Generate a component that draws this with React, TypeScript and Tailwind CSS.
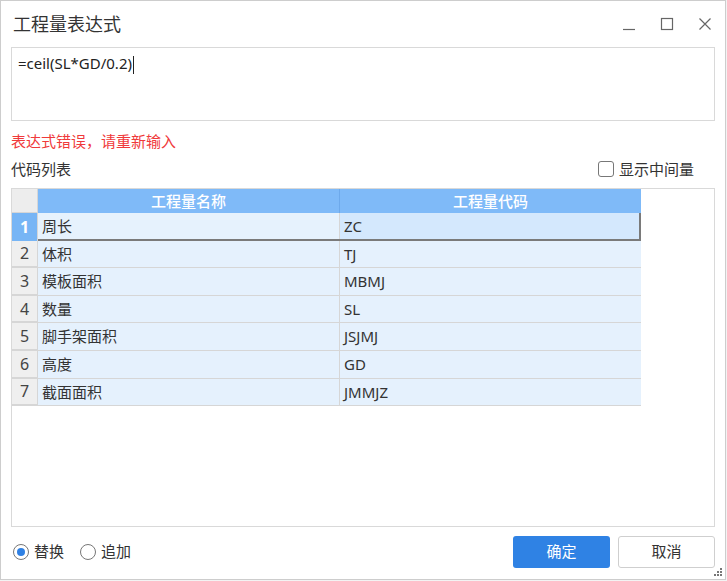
import { useState } from "react";

const ROWS = [
  { name: "周长", code: "ZC" },
  { name: "体积", code: "TJ" },
  { name: "模板面积", code: "MBMJ" },
  { name: "数量", code: "SL" },
  { name: "脚手架面积", code: "JSJMJ" },
  { name: "高度", code: "GD" },
  { name: "截面面积", code: "JMMJZ" },
];

const FONT = "font-['Noto_Sans','Noto_Sans_CJK_SC',sans-serif]";

export default function App() {
  const [mode, setMode] = useState<"replace" | "append">("replace");
  const [showMid, setShowMid] = useState(false);

  return (
    <div className={`w-[727px] h-[581px] bg-[#f3f3f3] ${FONT}`}>
      <div className="w-[726px] h-[580px] bg-white border border-[#cdcdcd] flex flex-col relative">
        {/* Title bar */}
        <div className="h-[46px] flex items-center pl-[12px] pr-[12px]">
          <span className="text-[18px] text-[#333]">工程量表达式</span>
          <div className="ml-auto flex items-center gap-[22px] text-[#555]">
            <svg width="16" height="16" viewBox="0 0 16 16">
              <path d="M2 13.5h12" stroke="#666" strokeWidth="1.2" />
            </svg>
            <svg width="16" height="16" viewBox="0 0 16 16">
              <rect x="2.5" y="2.5" width="11" height="11" fill="none" stroke="#666" strokeWidth="1.2" />
            </svg>
            <svg width="16" height="16" viewBox="0 0 16 16">
              <path d="M2.5 2.5l11 11M13.5 2.5l-11 11" stroke="#666" strokeWidth="1.2" />
            </svg>
          </div>
        </div>

        {/* Expression input */}
        <div className="mx-[10px] h-[74px] border border-[#d9d9d9] px-[6px] pt-[5px] leading-[20px]">
          <span className="text-[15px] text-[#222]">=ceil(SL*GD/0.2)</span>
          <span className="inline-block w-px h-[18px] bg-[#222] align-middle ml-[1px]" />
        </div>

        {/* Error message */}
        <div className="mx-[10px] mt-[10px] text-[15px] text-[#f0393a] leading-[20px]">
          表达式错误，请重新输入
        </div>

        {/* List heading */}
        <div className="mx-[10px] mt-[8px] flex items-center h-[20px]">
          <span className="text-[15px] text-[#333]">代码列表</span>
          <label
            className="ml-auto mr-[21px] flex items-center gap-[5px] cursor-pointer"
            onClick={() => setShowMid(!showMid)}
          >
            <span className="w-[16px] h-[16px] border border-[#777] rounded-[3px] bg-white" />
            <span className="text-[15px] text-[#333]">显示中间量</span>
          </label>
        </div>

        {/* Table */}
        <div className="mx-[10px] mt-[9px] h-[339px] border border-[#d9d9d9] bg-white">
          <div className="w-[629px]">
            {/* Header */}
            <div className="flex h-[24px] text-[15px] text-white font-medium">
              <div className="w-[26px] bg-[#ededed] border-r border-b border-[#d6d6d6]" />
              <div className="w-[302px] bg-[#7fbaf8] border-r border-[#6da9eb] flex items-center justify-center">
                工程量名称
              </div>
              <div className="w-[301px] bg-[#7fbaf8] flex items-center justify-center">
                工程量代码
              </div>
            </div>
            {ROWS.map((r, i) => {
              const sel = i === 0;
              return (
                <div
                  key={r.code}
                  className={`flex h-[27.6px] text-[15px] text-[#333] ${
                    sel ? "" : "border-b border-[#d6d6d6]"
                  }`}
                >
                  <div
                    className={`w-[26px] flex items-center justify-center border-r border-[#d6d6d6] text-[16px] ${
                      sel ? "bg-[#77b5f5] text-white font-bold" : "bg-[#efefef] border-b border-[#d6d6d6] text-[#444]"
                    }`}
                  >
                    {i + 1}
                  </div>
                  <div
                    className={`w-[603px] flex ${
                      sel ? "border-b-2 border-r-2 border-[#7a7a7a]" : ""
                    }`}
                  >
                    <div
                      className={`w-[302px] flex items-center pl-[4px] border-r border-[#d6d6d6] ${
                        sel ? "bg-[#e6f2fd]" : "bg-[#e5f1fd]"
                      }`}
                    >
                      {r.name}
                    </div>
                    <div
                      className={`flex-1 flex items-center pl-[4px] ${
                        sel ? "bg-[#d4e8fd]" : "bg-[#e5f1fd]"
                      }`}
                    >
                      {r.code}
                    </div>
                  </div>
                </div>
              );
            })}
          </div>
        </div>

        {/* Footer */}
        <div className="mx-[10px] mt-[8px] flex items-center h-[33px]">
          <label className="ml-[2px] flex items-center gap-[5px] cursor-pointer" onClick={() => setMode("replace")}>
            <span className="w-[16px] h-[16px] rounded-full border border-[#777] bg-white flex items-center justify-center">
              {mode === "replace" && <span className="w-[8px] h-[8px] rounded-full bg-[#2f80e3]" />}
            </span>
            <span className="text-[15px] text-[#333]">替换</span>
          </label>
          <label className="ml-[16px] flex items-center gap-[5px] cursor-pointer" onClick={() => setMode("append")}>
            <span className="w-[16px] h-[16px] rounded-full border border-[#777] bg-white flex items-center justify-center">
              {mode === "append" && <span className="w-[8px] h-[8px] rounded-full bg-[#2f80e3]" />}
            </span>
            <span className="text-[15px] text-[#333]">追加</span>
          </label>
          <button className="ml-auto w-[97px] h-[32px] rounded-[3px] bg-[#2f82e4] text-white text-[15px]">
            确定
          </button>
          <button className="ml-[8px] w-[97px] h-[32px] rounded-[3px] bg-white border border-[#cfcfcf] text-[#333] text-[15px]">
            取消
          </button>
        </div>

        {/* Resize grip */}
        <svg className="absolute right-[2px] bottom-[2px]" width="9" height="9" viewBox="0 0 9 9">
          <rect x="6" y="0" width="2" height="2" fill="#777" />
          <rect x="3" y="3" width="2" height="2" fill="#777" />
          <rect x="6" y="3" width="2" height="2" fill="#777" />
          <rect x="0" y="6" width="2" height="2" fill="#777" />
          <rect x="3" y="6" width="2" height="2" fill="#777" />
          <rect x="6" y="6" width="2" height="2" fill="#777" />
        </svg>
      </div>
    </div>
  );
}
